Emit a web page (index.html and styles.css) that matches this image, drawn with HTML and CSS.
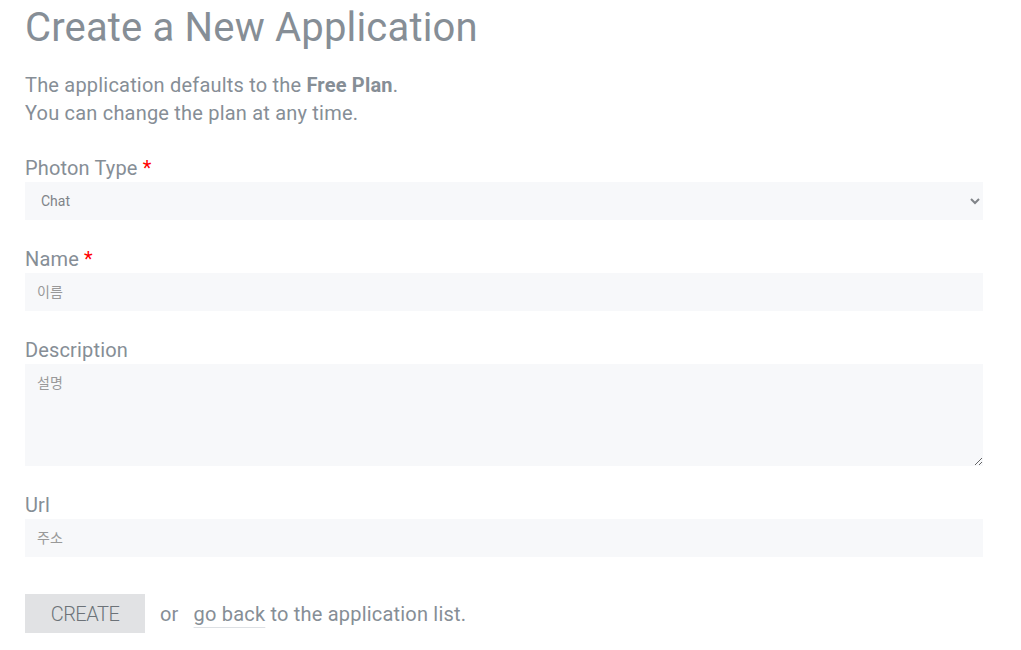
FILE: index.html
```html
<!DOCTYPE html>
<html lang="en">
<head>
<meta charset="utf-8">
<title>Create a New Application</title>
<link rel="stylesheet" href="styles.css">
</head>
<body>
<main class="page">
  <h1 class="title">Create a New Application</h1>
  <p class="intro">The application defaults to the <strong>Free Plan</strong>.<br>You can change the plan at any time.</p>
  <form class="form">
    <div class="group">
      <label class="label" for="type">Photon Type <span class="req">*</span></label>
      <select id="type" class="field select">
        <option>Chat</option>
      </select>
    </div>
    <div class="group">
      <label class="label" for="name">Name <span class="req">*</span></label>
      <input id="name" class="field" type="text" placeholder="이름">
    </div>
    <div class="group">
      <label class="label" for="desc">Description</label>
      <textarea id="desc" class="field area" placeholder="설명"></textarea>
    </div>
    <div class="group last">
      <label class="label" for="url">Url</label>
      <input id="url" class="field" type="text" placeholder="주소">
    </div>
    <div class="actions">
      <button type="button" class="btn">CREATE</button>
      <span class="or">or</span>
      <span class="back"><a href="#" class="link">go back</a> to the application list.</span>
    </div>
  </form>
</main>
</body>
</html>
```

FILE: styles.css
```css
html, body {
  margin: 0;
  padding: 0;
  background: #ffffff;
}
body {
  font-family: Roboto, "Noto Sans CJK KR", sans-serif;
  color: #868e96;
}
.page {
  padding: 4px 38px 0 25px;
}
.title {
  margin: 0;
  font-size: 40px;
  line-height: 48px;
  font-weight: 400;
  letter-spacing: 0.17px;
  color: #868e96;
}
.intro {
  margin: 19px 0 0;
  font-size: 20px;
  line-height: 28px;
  letter-spacing: 0.2px;
}
.intro strong {
  font-weight: 700;
}
.form {
  margin-top: 27px;
}
.group {
  display: flex;
  flex-direction: column;
  margin-bottom: 25px;
}
.group.last {
  margin-bottom: 37px;
}
.label {
  font-size: 20px;
  line-height: 28px;
  letter-spacing: 0.15px;
  color: #868e96;
}
.req {
  color: #ff0000;
}
.field {
  box-sizing: border-box;
  height: 38px;
  width: 100%;
  border: none;
  outline: none;
  background: #f7f8fa;
  font-family: Roboto, "Noto Sans CJK KR", sans-serif;
  font-size: 14px;
  color: #808488;
  padding: 0 12px;
  border-radius: 0;
}
.field::placeholder {
  color: #999;
}
.select {
  padding-left: 12px;
  padding-right: 8px;
}
.area {
  height: 102px;
  padding: 8px 12px;
  resize: vertical;
}
.actions {
  display: flex;
  align-items: center;
  font-size: 20px;
  line-height: 28px;
  letter-spacing: 0.2px;
}
.btn {
  width: 120px;
  height: 39px;
  border: none;
  background: #e1e2e4;
  color: #6c7278;
  font-family: Roboto, sans-serif;
  font-weight: 300;
  font-size: 20px;
  letter-spacing: -0.5px;
  padding: 0;
  margin-right: 15px;
  border-radius: 0;
}
.or {
  margin-right: 15px;
}
.link {
  color: #868e96;
  text-decoration: underline;
  text-decoration-color: #dde0e4;
  text-decoration-thickness: 1px;
  text-underline-offset: 6px;
}
```
